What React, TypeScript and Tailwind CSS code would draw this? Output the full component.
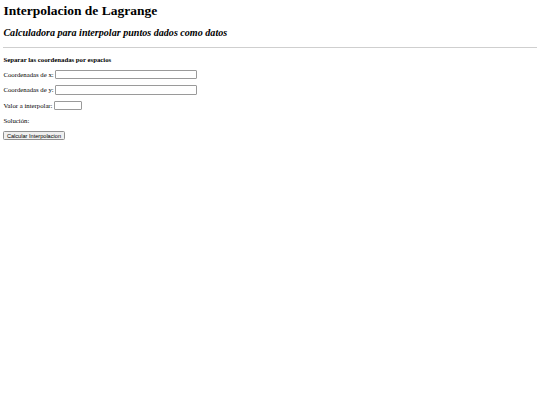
import React from "react";

export default function App() {
  return (
    <div className="min-h-[405px] bg-white px-[3.4px] pt-[3.4px] text-black [font-family:'Liberation_Serif',serif] text-[6.75px] leading-[7.8px]">
      <h1 className="m-0 text-[13.5px] leading-[15.5px] font-bold">Interpolacion de Lagrange</h1>
      <h2 className="mt-[8.4px] mb-[8.4px] text-[10.1px] leading-[11.6px] font-bold italic">
        Calculadora para interpolar puntos dados como datos
      </h2>
      <div className="h-[1px] bg-[#cfcfcf]" />
      <h4 className="mt-[8px] mb-[5.8px] text-[6.75px] leading-[7.8px] font-bold">Separar las coordenadas por espacios</h4>
      <div className="flex flex-col gap-[6px]">
        <label className="flex items-center gap-[1.6px]">
          <span>Coordenadas de x:</span>
          <input className="h-[9.5px] w-[142px] border border-[#9a9a9a] bg-white rounded-[1px]" />
        </label>
        <label className="flex items-center gap-[1.6px]">
          <span>Coordenadas de y:</span>
          <input className="h-[9.5px] w-[142px] border border-[#9a9a9a] bg-white rounded-[1px]" />
        </label>
        <label className="flex items-center gap-[1.6px]">
          <span>Valor a interpolar:</span>
          <input className="h-[9.5px] w-[28px] border border-[#9a9a9a] bg-white rounded-[1px]" />
        </label>
        <p className="m-0 leading-[9px]">Solución:</p>
        <div>
          <button className="h-[8.5px] px-[2.5px] border border-[#8f8f8f] bg-[#efefef] rounded-[1.5px] [font-family:'Liberation_Sans',Arial,sans-serif] text-[5.6px] leading-[6px]">
            Calcular Interpolacion
          </button>
        </div>
      </div>
    </div>
  );
}
